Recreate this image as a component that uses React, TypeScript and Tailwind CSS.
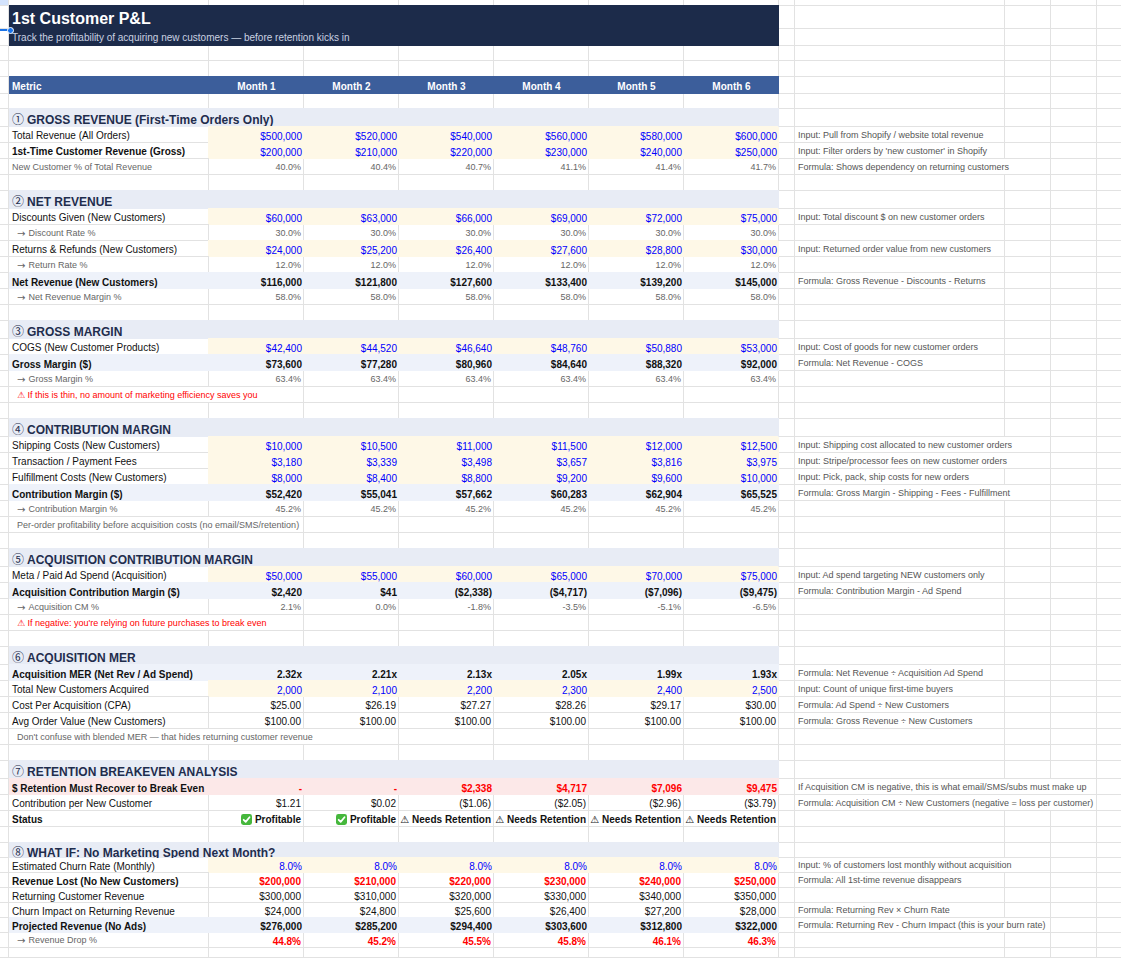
import React from 'react';

const LINE = 'border-r border-b border-[#e2e2e2]';

type Span = 1 | 2 | 3;
type LabelKind = 'plain' | 'bold' | 'sub' | 'gray';
type ValKind = 'input' | 'plain' | 'bold' | 'gray' | 'red';

type RowDef =
  | { kind: 'empty'; h?: string }
  | { kind: 'section'; num: string; title: string; h?: string; clip?: boolean }
  | {
      kind: 'data';
      label: string;
      lk?: LabelKind;
      vals: string[];
      vk?: ValKind;
      fill?: 'total' | 'pink';
      note?: string;
      span?: Span;
      h?: string;
    }
  | { kind: 'remark'; text: string; red?: boolean; span: 2 | 3 }
  | { kind: 'status' };

const LABEL: Record<LabelKind, string> = {
  plain: 'pl-[3px] text-[10px] text-[#111]',
  bold: 'pl-[3px] text-[10px] font-bold text-[#111]',
  sub: 'pl-[8px] text-[9px] text-[#666]',
  gray: 'pl-[3px] text-[9px] text-[#666]',
};

const VAL: Record<ValKind, string> = {
  input: 'text-[10px] text-[#0000ff]',
  plain: 'text-[10px] text-[#111]',
  bold: 'text-[10px] font-bold text-[#111]',
  gray: 'text-[9px] text-[#666]',
  red: 'text-[10px] font-bold text-[#ff0000]',
};

const rep = (v: string) => [v, v, v, v, v, v];

const ROWS: RowDef[] = [
  { kind: 'section', num: '①', title: 'GROSS REVENUE (First-Time Orders Only)' },
  { kind: 'data', label: 'Total Revenue (All Orders)', vk: 'input', vals: ['$500,000', '$520,000', '$540,000', '$560,000', '$580,000', '$600,000'], note: 'Input: Pull from Shopify / website total revenue' },
  { kind: 'data', label: '1st-Time Customer Revenue (Gross)', lk: 'bold', vk: 'input', vals: ['$200,000', '$210,000', '$220,000', '$230,000', '$240,000', '$250,000'], note: "Input: Filter orders by 'new customer' in Shopify" },
  { kind: 'data', label: 'New Customer % of Total Revenue', lk: 'gray', vk: 'gray', vals: ['40.0%', '40.4%', '40.7%', '41.1%', '41.4%', '41.7%'], note: 'Formula: Shows dependency on returning customers', span: 2 },
  { kind: 'empty' },

  { kind: 'section', num: '②', title: 'NET REVENUE' },
  { kind: 'data', label: 'Discounts Given (New Customers)', vk: 'input', vals: ['$60,000', '$63,000', '$66,000', '$69,000', '$72,000', '$75,000'], note: 'Input: Total discount $ on new customer orders' },
  { kind: 'data', label: 'Discount Rate %', lk: 'sub', vk: 'gray', vals: rep('30.0%') },
  { kind: 'data', label: 'Returns & Refunds (New Customers)', vk: 'input', vals: ['$24,000', '$25,200', '$26,400', '$27,600', '$28,800', '$30,000'], note: 'Input: Returned order value from new customers' },
  { kind: 'data', label: 'Return Rate %', lk: 'sub', vk: 'gray', vals: rep('12.0%') },
  { kind: 'data', label: 'Net Revenue (New Customers)', lk: 'bold', vk: 'bold', fill: 'total', vals: ['$116,000', '$121,800', '$127,600', '$133,400', '$139,200', '$145,000'], note: 'Formula: Gross Revenue - Discounts - Returns' },
  { kind: 'data', label: 'Net Revenue Margin %', lk: 'sub', vk: 'gray', vals: rep('58.0%') },
  { kind: 'empty' },

  { kind: 'section', num: '③', title: 'GROSS MARGIN' },
  { kind: 'data', label: 'COGS (New Customer Products)', vk: 'input', vals: ['$42,400', '$44,520', '$46,640', '$48,760', '$50,880', '$53,000'], note: 'Input: Cost of goods for new customer orders' },
  { kind: 'data', label: 'Gross Margin ($)', lk: 'bold', vk: 'bold', fill: 'total', vals: ['$73,600', '$77,280', '$80,960', '$84,640', '$88,320', '$92,000'], note: 'Formula: Net Revenue - COGS' },
  { kind: 'data', label: 'Gross Margin %', lk: 'sub', vk: 'gray', vals: rep('63.4%') },
  { kind: 'remark', text: '⚠ If this is thin, no amount of marketing efficiency saves you', red: true, span: 2 },
  { kind: 'empty' },

  { kind: 'section', num: '④', title: 'CONTRIBUTION MARGIN' },
  { kind: 'data', label: 'Shipping Costs (New Customers)', vk: 'input', vals: ['$10,000', '$10,500', '$11,000', '$11,500', '$12,000', '$12,500'], note: 'Input: Shipping cost allocated to new customer orders', span: 2 },
  { kind: 'data', label: 'Transaction / Payment Fees', vk: 'input', vals: ['$3,180', '$3,339', '$3,498', '$3,657', '$3,816', '$3,975'], note: 'Input: Stripe/processor fees on new customer orders', span: 2 },
  { kind: 'data', label: 'Fulfillment Costs (New Customers)', vk: 'input', vals: ['$8,000', '$8,400', '$8,800', '$9,200', '$9,600', '$10,000'], note: 'Input: Pick, pack, ship costs for new orders' },
  { kind: 'data', label: 'Contribution Margin ($)', lk: 'bold', vk: 'bold', fill: 'total', vals: ['$52,420', '$55,041', '$57,662', '$60,283', '$62,904', '$65,525'], note: 'Formula: Gross Margin - Shipping - Fees - Fulfillment', span: 2 },
  { kind: 'data', label: 'Contribution Margin %', lk: 'sub', vk: 'gray', vals: rep('45.2%') },
  { kind: 'remark', text: 'Per-order profitability before acquisition costs (no email/SMS/retention)', span: 2 },
  { kind: 'empty' },

  { kind: 'section', num: '⑤', title: 'ACQUISITION CONTRIBUTION MARGIN' },
  { kind: 'data', label: 'Meta / Paid Ad Spend (Acquisition)', vk: 'input', vals: ['$50,000', '$55,000', '$60,000', '$65,000', '$70,000', '$75,000'], note: 'Input: Ad spend targeting NEW customers only' },
  { kind: 'data', label: 'Acquisition Contribution Margin ($)', lk: 'bold', vk: 'bold', fill: 'total', vals: ['$2,420', '$41', '($2,338)', '($4,717)', '($7,096)', '($9,475)'], note: 'Formula: Contribution Margin - Ad Spend' },
  { kind: 'data', label: 'Acquisition CM %', lk: 'sub', vk: 'gray', vals: ['2.1%', '0.0%', '-1.8%', '-3.5%', '-5.1%', '-6.5%'] },
  { kind: 'remark', text: "⚠ If negative: you're relying on future purchases to break even", red: true, span: 2 },
  { kind: 'empty' },

  { kind: 'section', num: '⑥', title: 'ACQUISITION MER' },
  { kind: 'data', label: 'Acquisition MER (Net Rev / Ad Spend)', lk: 'bold', vk: 'bold', fill: 'total', vals: ['2.32x', '2.21x', '2.13x', '2.05x', '1.99x', '1.93x'], note: 'Formula: Net Revenue ÷ Acquisition Ad Spend' },
  { kind: 'data', label: 'Total New Customers Acquired', vk: 'input', vals: ['2,000', '2,100', '2,200', '2,300', '2,400', '2,500'], note: 'Input: Count of unique first-time buyers' },
  { kind: 'data', label: 'Cost Per Acquisition (CPA)', vk: 'plain', vals: ['$25.00', '$26.19', '$27.27', '$28.26', '$29.17', '$30.00'], note: 'Formula: Ad Spend ÷ New Customers' },
  { kind: 'data', label: 'Avg Order Value (New Customers)', vk: 'plain', vals: rep('$100.00'), note: 'Formula: Gross Revenue ÷ New Customers' },
  { kind: 'remark', text: "Don't confuse with blended MER — that hides returning customer revenue", span: 3 },
  { kind: 'empty' },

  { kind: 'section', num: '⑦', title: 'RETENTION BREAKEVEN ANALYSIS' },
  { kind: 'data', label: '$ Retention Must Recover to Break Even', lk: 'bold', vk: 'red', fill: 'pink', vals: ['-', '-', '$2,338', '$4,717', '$7,096', '$9,475'], note: 'If Acquisition CM is negative, this is what email/SMS/subs must make up', span: 3 },
  { kind: 'data', label: 'Contribution per New Customer', vk: 'plain', vals: ['$1.21', '$0.02', '($1.06)', '($2.05)', '($2.96)', '($3.79)'], note: 'Formula: Acquisition CM ÷ New Customers (negative = loss per customer)', span: 3 },
  { kind: 'status' },
  { kind: 'empty' },

  { kind: 'section', num: '⑧', title: 'WHAT IF: No Marketing Spend Next Month?', h: 'h-[15px]', clip: true },
  { kind: 'data', h: 'h-[15px]', label: 'Estimated Churn Rate (Monthly)', vk: 'input', vals: rep('8.0%'), note: 'Input: % of customers lost monthly without acquisition', span: 2 },
  { kind: 'data', h: 'h-[15px]', label: 'Revenue Lost (No New Customers)', lk: 'bold', vk: 'red', vals: ['$200,000', '$210,000', '$220,000', '$230,000', '$240,000', '$250,000'], note: 'Formula: All 1st-time revenue disappears' },
  { kind: 'data', h: 'h-[15px]', label: 'Returning Customer Revenue', vk: 'plain', vals: ['$300,000', '$310,000', '$320,000', '$330,000', '$340,000', '$350,000'] },
  { kind: 'data', h: 'h-[15px]', label: 'Churn Impact on Returning Revenue', vk: 'plain', vals: ['$24,000', '$24,800', '$25,600', '$26,400', '$27,200', '$28,000'], note: 'Formula: Returning Rev × Churn Rate' },
  { kind: 'data', h: 'h-[15px]', label: 'Projected Revenue (No Ads)', lk: 'bold', vk: 'bold', fill: 'total', vals: ['$276,000', '$285,200', '$294,400', '$303,600', '$312,800', '$322,000'], note: 'Formula: Returning Rev - Churn Impact (this is your burn rate)', span: 2 },
  { kind: 'data', h: 'h-[15px]', label: 'Revenue Drop %', lk: 'sub', vk: 'red', vals: ['44.8%', '45.2%', '45.5%', '45.8%', '46.1%', '46.3%'] },
  { kind: 'empty', h: 'h-[10px]' },
];

function ColA({ className = '' }: { className?: string }) {
  return <div className={`w-[9px] shrink-0 ${LINE} ${className}`} />;
}

function Tail({ note, span = 1 }: { note?: string; span?: Span }) {
  const jw = span === 3 ? 'w-[302px]' : span === 2 ? 'w-[256px]' : 'w-[210px]';
  return (
    <>
      <div className={`w-[16px] shrink-0 ${LINE}`} />
      <div className={`${jw} shrink-0 ${LINE} flex items-center pt-[2px] pl-[3px] text-[9px] text-[#555] whitespace-nowrap overflow-hidden`}>
        {note}
      </div>
      {span < 2 && <div className={`w-[46px] shrink-0 ${LINE}`} />}
      {span < 3 && <div className={`w-[46px] shrink-0 ${LINE}`} />}
      <div className="flex-1 min-w-0 border-b border-[#e2e2e2]" />
    </>
  );
}

function EmptyMonths({ n = 6 }: { n?: number }) {
  return (
    <>
      {Array.from({ length: n }).map((_, i) => (
        <div key={i} className={`w-[95px] shrink-0 ${LINE}`} />
      ))}
    </>
  );
}

function CheckBox() {
  return (
    <svg width="11" height="11" viewBox="0 0 12 12" className="shrink-0">
      <rect x="0" y="0" width="12" height="12" rx="2.6" fill="#45b73c" />
      <path d="M2.9 6.3 L5.1 8.6 L9.3 3.5" fill="none" stroke="#fff" strokeWidth="1.9" strokeLinecap="round" strokeLinejoin="round" />
    </svg>
  );
}

function Label({ def }: { def: { label: string; lk?: LabelKind } }) {
  if (def.lk === 'sub') {
    return (
      <>
        <span className="font-['DejaVu_Sans',sans-serif] text-[10px] leading-none mr-[3px]">→</span>
        {def.label}
      </>
    );
  }
  return <>{def.label}</>;
}

function Row({ def }: { def: RowDef }) {
  if (def.kind === 'empty') {
    return (
      <div className={`flex ${def.h ?? 'h-[16px]'}`}>
        <ColA />
        <div className={`w-[200px] shrink-0 ${LINE}`} />
        <EmptyMonths />
        <Tail />
      </div>
    );
  }

  if (def.kind === 'section') {
    return (
      <div className={`flex ${def.h ?? 'h-[18px]'}`}>
        <ColA />
        <div
          className={`w-[770px] shrink-0 bg-[#e8ecf5] shadow-[0_-1px_0_0_#e8ecf5] flex pl-[3px] text-[12px] font-bold text-[#1f2d4d] whitespace-nowrap ${
            def.clip ? 'items-end overflow-hidden' : 'items-center pt-[2px]'
          }`}
        >
          <span className={def.clip ? 'relative top-[2px] leading-[14px]' : 'leading-[14px]'}>
            <span className="font-['Noto_Sans_CJK_JP',sans-serif] font-normal text-[12px] mr-[3px]">{def.num}</span>
            {def.title}
          </span>
        </div>
        <Tail />
      </div>
    );
  }

  if (def.kind === 'remark') {
    const w = def.span === 3 ? 'w-[390px]' : 'w-[295px]';
    return (
      <div className="flex h-[16px]">
        <ColA />
        <div
          className={`${w} shrink-0 ${LINE} flex items-center pt-[2px] pl-[8px] text-[9px] whitespace-nowrap ${
            def.red ? 'text-[#ff0000]' : 'text-[#666]'
          }`}
        >
          {def.text}
        </div>
        <EmptyMonths n={def.span === 3 ? 4 : 5} />
        <Tail />
      </div>
    );
  }

  if (def.kind === 'status') {
    const ok = [true, true, false, false, false, false];
    return (
      <div className="flex h-[16px]">
        <ColA />
        <div className={`w-[200px] shrink-0 ${LINE} flex items-center pt-[2px] ${LABEL.bold}`}>Status</div>
        {ok.map((good, i) => (
          <div
            key={i}
            className={`w-[95px] shrink-0 ${LINE} flex items-center justify-end pt-[2px] pr-[2px] whitespace-nowrap text-[10px] font-bold text-[#111]`}
          >
            {good ? (
              <span className="inline-flex items-center gap-[3px]">
                <CheckBox />
                Profitable
              </span>
            ) : (
              <span>⚠ Needs Retention</span>
            )}
          </div>
        ))}
        <Tail />
      </div>
    );
  }

  const h = def.h ?? 'h-[16px]';
  const lk = def.lk ?? 'plain';
  const vk = def.vk ?? 'plain';
  const valCell = `w-[95px] shrink-0 flex items-center justify-end pt-[2px] pr-[2px] whitespace-nowrap ${VAL[vk]}`;
  const labelCell = `w-[200px] shrink-0 flex items-center pt-[2px] whitespace-nowrap ${LABEL[lk]}`;

  if (def.fill) {
    const bg =
      def.fill === 'pink'
        ? 'bg-[#fce8e8] shadow-[0_-1px_0_0_#fce8e8]'
        : 'bg-[#eef2fa] shadow-[0_-1px_0_0_#eef2fa]';
    return (
      <div className={`flex ${h}`}>
        <ColA />
        <div className={`w-[770px] shrink-0 flex ${bg}`}>
          <div className={labelCell}>
            <Label def={def} />
          </div>
          {def.vals.map((v, i) => (
            <div key={i} className={valCell}>
              {v}
            </div>
          ))}
        </div>
        <Tail note={def.note} span={def.span} />
      </div>
    );
  }

  return (
    <div className={`flex ${h}`}>
      <ColA />
      <div className={`${labelCell} ${LINE}`}>
        <Label def={def} />
      </div>
      {vk === 'input' ? (
        <div className="w-[570px] shrink-0 flex bg-[#fef8e7] shadow-[-1px_-1px_0_0_#fef8e7]">
          {def.vals.map((v, i) => (
            <div key={i} className={valCell}>
              {v}
            </div>
          ))}
        </div>
      ) : (
        def.vals.map((v, i) => (
          <div key={i} className={`${valCell} ${LINE}`}>
            {v}
          </div>
        ))
      )}
      <Tail note={def.note} span={def.span} />
    </div>
  );
}

export default function App() {
  const months = ['Month 1', 'Month 2', 'Month 3', 'Month 4', 'Month 5', 'Month 6'];
  return (
    <div className="relative w-[1121px] h-[958px] overflow-hidden bg-white font-['Liberation_Sans','DejaVu_Sans','Noto_Sans_CJK_JP',sans-serif]">
      {/* partial top row */}
      <div className="flex h-[6px]">
        <ColA className="bg-[#d3e3fd]" />
        <div className={`w-[200px] shrink-0 ${LINE}`} />
        <EmptyMonths />
        <Tail />
      </div>

      {/* title block */}
      <div className="flex h-[40px]">
        <div className="flex flex-col w-[9px] shrink-0">
          <div className={`h-[23px] ${LINE}`} />
          <div className={`h-[17px] ${LINE}`} />
        </div>
        <div className="w-[770px] shrink-0 bg-[#1c2b4a] shadow-[0_-1px_0_0_#1c2b4a] pl-[3px]">
          <div className="text-[16px] leading-[23px] pt-[1px] font-bold text-white">1st Customer P&amp;L</div>
          <div className="text-[10px] leading-[16px] text-[#c9d1e1]">
            Track the profitability of acquiring new customers — before retention kicks in
          </div>
        </div>
        <div className="flex flex-col flex-1 min-w-0">
          <div className="flex h-[23px]">
            <Tail />
          </div>
          <div className="flex h-[17px]">
            <Tail />
          </div>
        </div>
      </div>

      <Row def={{ kind: 'empty', h: 'h-[15px]' }} />
      <Row def={{ kind: 'empty' }} />

      {/* column header */}
      <div className="flex h-[17px]">
        <ColA />
        <div className="w-[770px] shrink-0 flex bg-[#3c5e9b] shadow-[0_-1px_0_0_#3c5e9b] text-[10px] font-bold text-white">
          <div className="w-[200px] shrink-0 flex items-center pt-[1px] pl-[3px]">Metric</div>
          {months.map((m) => (
            <div key={m} className="w-[95px] shrink-0 flex items-center justify-center pt-[1px]">
              {m}
            </div>
          ))}
        </div>
        <Tail />
      </div>

      <Row def={{ kind: 'empty', h: 'h-[15px]' }} />

      {ROWS.map((r, i) => (
        <Row key={i} def={r} />
      ))}

      {/* active cell selection */}
      <div className="absolute left-0 top-[29px] w-[10px] h-[2px] bg-[#1a73e8]" />
      <div className="absolute left-[7px] top-[27px] w-[7px] h-[7px] rounded-full bg-[#1a73e8] border border-white" />
    </div>
  );
}
